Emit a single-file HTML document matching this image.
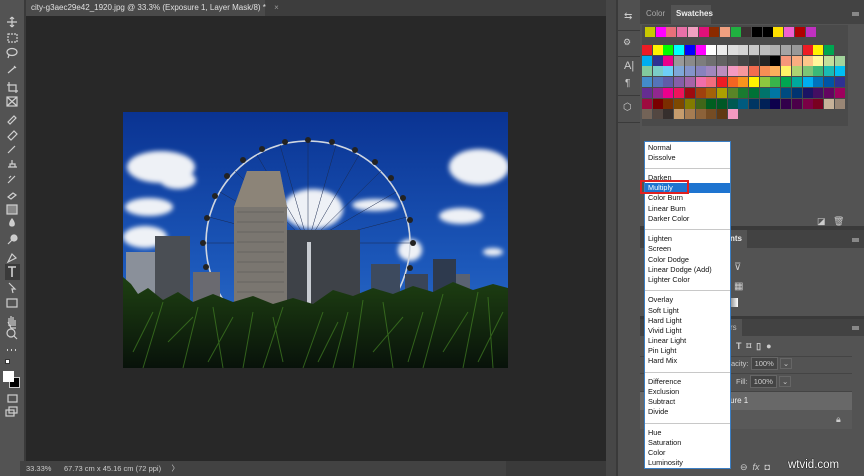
<!DOCTYPE html>
<html><head><meta charset="utf-8">
<style>
*{margin:0;padding:0;box-sizing:border-box}
body{width:864px;height:476px;overflow:hidden;background:#282828;position:relative;font-family:"Liberation Sans",Arial,sans-serif;font-size:8px;color:#ddd}
.a{position:absolute}
.sw{position:absolute;width:10px;height:10px}
.dd div{height:10.2px;line-height:10.2px;padding-left:3px;color:#111;font-size:7.3px}
.dd .s{position:relative}
.dd .s:after{content:"";position:absolute;left:0;right:0;top:5px;height:1px;background:#c8c8c8}
.ic{position:absolute;color:#ccc;font-size:10px}
</style></head><body>
<div class="a" style="left:0;top:0;width:24px;height:476px;background:#535353"></div>
<div class="a" style="left:24px;top:0;width:2px;height:476px;background:#3a3a3a"></div>
<div class="a" style="left:26px;top:0;width:580px;height:16px;background:#3d3d3d"></div>
<div class="a" style="left:26px;top:0;width:239px;height:16px;background:#4a4a4a;color:#e0e0e0;font-size:8px;line-height:15px;padding-left:5px;white-space:nowrap">city-g3aec29e42_1920.jpg @ 33.3% (Exposure 1, Layer Mask/8) * <span style="color:#999;margin-left:6px">×</span></div>
<svg class="a" style="left:0;top:0" width="24" height="420" fill="none" stroke="#d0d0d0" stroke-width="1.2">
<path d="M12 17v10M7 22h10M12 17l-2 2M12 17l2 2M12 27l-2-2M12 27l2-2"/>
<rect x="8" y="34" width="9" height="8" stroke-dasharray="2 1"/>
<ellipse cx="12" cy="52" rx="5" ry="3.5"/><path d="M9 55l-1 3"/>
<path d="M8 73l7-6M14 66l2 2"/>
<path d="M9 82v9h9M7 85h9v8"/>
<rect x="7" y="97" width="10" height="9"/><path d="M7 97l10 9M17 97l-10 9"/>
<path d="M8 122l6-6 2 2-6 6z"/>
<path d="M8 137l6-6 3 3-6 6z"/>
<path d="M8 153l7-7"/>
<path d="M8 167h9M10 167v-3h5v3M12 164v-4"/>
<path d="M8 183l7-7M9 178l2-2"/>
<path d="M8 197l5-4 3 2-5 4z"/>
<rect x="7" y="205" width="10" height="9" fill="#888"/>
<path d="M12 219c-3 4-3 7 0 7s3-3 0-7z" fill="#ccc"/>
<circle cx="14" cy="238" r="3" fill="#ccc"/><path d="M12 240l-4 4"/>
<path d="M8 262l4-8 4 4z"/>
<rect x="5" y="264" width="15" height="16" fill="#3a3a3a" stroke="none"/>
<path d="M8 267h8M12 267v10" stroke-width="1.6"/>
<path d="M9 283l6 6h-3l1 4" />
<rect x="7" y="299" width="10" height="8"/>
<path d="M9 326v-8M11 326v-10M13 326v-9M15 326v-6M8 322l3 6h5"/>
<circle cx="11" cy="333" r="4"/><path d="M14 336l3 3"/>
<path d="M7 350h1M11 350h1M15 350h1" stroke-width="2"/>
<rect x="8" y="395" width="9" height="7"/>
<rect x="6" y="410" width="8" height="6"/><rect x="9" y="407" width="8" height="6"/>
</svg>
<div class="a" style="left:5px;top:359px;width:5px;height:5px;background:#fff;border:1px solid #333"></div>
<div class="a" style="left:9px;top:377px;width:11px;height:11px;background:#000;border:1px solid #ccc"></div>
<div class="a" style="left:3px;top:371px;width:11px;height:11px;background:#fff"></div>
<div class="a" style="left:20px;top:461px;width:486px;height:15px;background:#424242;color:#ccc;font-size:7.5px;line-height:15px;padding-left:6px;white-space:nowrap">33.33%&nbsp;&nbsp;&nbsp;&nbsp;&nbsp;&nbsp;67.73 cm x 45.16 cm (72 ppi)&nbsp;&nbsp;&nbsp;&nbsp;&nbsp;〉</div>
<div class="a" style="left:506px;top:461px;width:100px;height:15px;background:#3a3a3a"></div>
<div class="a" style="left:606px;top:0;width:10px;height:476px;background:#474747"></div>
<div class="a" style="left:616px;top:0;width:2px;height:476px;background:#3a3a3a"></div>
<div class="a" style="left:618px;top:0;width:22px;height:476px;background:#505050"></div>
<div class="a" style="left:618px;top:30px;width:22px;height:1px;background:#3a3a3a"></div>
<div class="a" style="left:618px;top:56px;width:22px;height:1px;background:#3a3a3a"></div>
<div class="a" style="left:618px;top:95px;width:22px;height:1px;background:#3a3a3a"></div>
<div class="a" style="left:618px;top:122px;width:22px;height:1px;background:#3a3a3a"></div>
<div class="ic" style="left:624px;top:11px">⇆</div>
<div class="ic" style="left:623px;top:37px;font-size:9px">⚙</div>
<div class="ic" style="left:624px;top:60px;font-size:11px">A|</div>
<div class="ic" style="left:625px;top:78px">¶</div>
<div class="ic" style="left:623px;top:102px">⬡</div>
<div class="a" style="left:640px;top:0;width:224px;height:476px;background:#535353"></div>
<div class="a" style="left:640px;top:0;width:224px;height:24px;background:#434343"></div>
<div class="a" style="left:640px;top:5px;width:31px;height:19px;color:#aaa;font-size:8px;line-height:17px;padding-left:6px">Color</div>
<div class="a" style="left:671px;top:5px;width:40px;height:19px;background:#535353;color:#eee;font-size:8px;line-height:17px;padding-left:5px;font-weight:bold">Swatches</div>
<div class="a" style="left:852px;top:12px;width:7px;height:4px;background:#888"></div>
<div class="a" style="left:642px;top:25px;width:206px;height:101px;background:#4a4a4a"></div>
<div class="a" style="left:640px;top:226px;width:224px;height:4px;background:#3a3a3a"></div>
<div class="a" style="left:640px;top:230px;width:224px;height:18px;background:#424242"></div>
<div class="a" style="left:700px;top:230px;width:47px;height:18px;background:#535353;color:#eee;font-weight:bold;font-size:8px;line-height:18px;padding-left:30px">nts</div>
<div class="a" style="left:852px;top:238px;width:7px;height:4px;background:#888"></div>
<div class="a" style="left:640px;top:316px;width:224px;height:3px;background:#3a3a3a"></div>
<div class="a" style="left:640px;top:319px;width:224px;height:17px;background:#424242"></div>
<div class="a" style="left:700px;top:319px;width:42px;height:17px;background:#535353;color:#bbb;font-size:8px;line-height:17px;padding-left:30px">rs</div>
<div class="a" style="left:852px;top:326px;width:7px;height:4px;background:#888"></div>
<div class="a" style="left:640px;top:356px;width:212px;height:1px;background:#444"></div>
<div class="a" style="left:640px;top:373px;width:212px;height:1px;background:#444"></div>
<div class="a" style="left:640px;top:391px;width:212px;height:1px;background:#444"></div>
<div class="ic" style="left:736px;top:341px;font-size:9px;font-weight:bold">T&nbsp;&nbsp;⌑&nbsp;&nbsp;▯&nbsp;&nbsp;●</div>
<div class="a" style="left:731px;top:359px;color:#ccc;font-size:7.5px;white-space:nowrap">acity: <span style="background:#444;padding:1px 3px;border:1px solid #666">100%</span> <span style="border:1px solid #666;padding:0 2px">⌄</span></div>
<div class="a" style="left:736px;top:377px;color:#ccc;font-size:7.5px;white-space:nowrap">Fill: <span style="background:#444;padding:1px 3px;border:1px solid #666">100%</span> <span style="border:1px solid #666;padding:0 2px">⌄</span></div>
<div class="a" style="left:640px;top:392px;width:212px;height:18px;background:#686868;color:#eee;font-size:8px;line-height:18px;padding-left:90px">ure 1</div>
<div class="a" style="left:640px;top:410px;width:212px;height:19px;background:#595959"></div>
<div class="ic" style="left:836px;top:414px;font-size:9px">🔒︎</div>
<div class="ic" style="left:734px;top:262px;font-size:10px">⊽</div>
<div class="ic" style="left:734px;top:281px;font-size:10px">▦</div>
<div class="a" style="left:730px;top:298px;width:8px;height:9px;background:linear-gradient(90deg,#888,#fff)"></div>
<div class="ic" style="left:817px;top:216px;font-size:9px">◪&nbsp;&nbsp;&nbsp;🗑︎</div>
<div class="a" style="left:740px;top:462px;color:#ccc;font-size:9px;white-space:nowrap">⊖&nbsp;&nbsp;<i>fx</i>&nbsp;&nbsp;◘&nbsp;&nbsp;&nbsp;&nbsp;</div>
<div class="a" style="left:788px;top:459px;color:#fff;font-size:11.5px;white-space:nowrap;text-shadow:0 0 1px #000,0 0 1px #000">wtvid.com</div>
<div id="sw"></div>
<script>
(function(){
var top=["#c8c800","#ff00ff","#e8707a","#e870a8","#f0a0c0","#e0107a","#8b2a00","#f0a080","#20b040","#3a3232","#000","#000","#ffe000","#f060d0","#b00000","#c030c0"];
var g=[
["#ed1c24","#fff200","#00ff00","#00ffff","#0000ff","#ff00ff","#fff","#ececec","#dedede","#d4d4d4","#c8c8c8","#bcbcbc","#b0b0b0","#a4a4a4","#989898","#ed1c24","#fff200","#00a651"],
["#00aeef","#2e3192","#ec008c","#999","#8a8a8a","#7d7d7d","#6f6f6f","#626262","#555","#464646","#363636","#252525","#000","#f7977a","#f9ad81","#fdc68a","#fff79a","#c4df9b","#a3d39c"],
["#82ca9d","#7bcdc8","#6ecff6","#7ea7d8","#8493ca","#8882be","#a187be","#bc8dbf","#f49ac2","#f6989d","#f26c4f","#f68e55","#fbaf5c","#fff467","#acd372","#7cc576","#3bb878","#1abbb4","#00bff3"],
["#438ccb","#5574b9","#605ca8","#855fa8","#a763a8","#f06eaa","#f26d7d","#ed1c24","#f26522","#f7941d","#fff200","#8dc73f","#39b54a","#00a651","#00a99d","#00aeef","#0072bc","#0054a6","#2e3192"],
["#662d91","#92278f","#ec008c","#ed145b","#9e0b0f","#a0410d","#a36209","#aba000","#598527","#197b30","#007236","#00746b","#0076a3","#004b80","#003471","#1b1464","#440e62","#630460","#9e005d"],
["#9e0b3f","#790000","#7b2e00","#7d4900","#827b00","#406618","#005e20","#005826","#005952","#005b7f","#003663","#002157","#0d004c","#32004b","#4b0049","#7b0046","#790020","#c7b299","#998675"],
["#736357","#534741","#362f2d","#c69c6d","#a67c52","#8c6239","#754c24","#603913","#f49ac2"]];
var h="";
top.forEach(function(c,i){h+='<div class="sw" style="left:'+(645+i*10.7)+'px;top:27px;background:'+c+'"></div>';});
g.forEach(function(r,j){r.forEach(function(c,i){h+='<div class="sw" style="left:'+(642+i*10.7)+'px;top:'+(45+j*10.7)+'px;background:'+c+'"></div>';});});
document.getElementById("sw").innerHTML=h;
})();
</script>
<svg class="a" style="left:123px;top:112px" width="385" height="256" viewBox="0 0 385 256">
<defs>
<linearGradient id="sky" x1="0" y1="0" x2="0" y2="1"><stop offset="0" stop-color="#0a3392"/><stop offset="0.6" stop-color="#1c58ba"/><stop offset="1" stop-color="#3474cc"/></linearGradient>
<filter id="bl"><feGaussianBlur stdDeviation="2.5"/></filter>
<linearGradient id="gr" x1="0" y1="0" x2="0" y2="1"><stop offset="0" stop-color="#1e4012"/><stop offset="1" stop-color="#08120a"/></linearGradient>
</defs>
<rect width="385" height="256" fill="url(#sky)"/>
<g fill="#eef1f6" filter="url(#bl)">
<ellipse cx="38" cy="55" rx="34" ry="16"/><ellipse cx="55" cy="68" rx="18" ry="9"/>
<ellipse cx="26" cy="95" rx="24" ry="9"/>
<ellipse cx="22" cy="125" rx="22" ry="11"/>
<ellipse cx="356" cy="55" rx="30" ry="18"/>
<ellipse cx="338" cy="104" rx="22" ry="8"/>
<ellipse cx="190" cy="97" rx="30" ry="20"/>
<ellipse cx="252" cy="93" rx="23" ry="6"/>
<ellipse cx="287" cy="138" rx="12" ry="11"/>
<ellipse cx="370" cy="140" rx="10" ry="4"/>
</g>
<circle cx="185" cy="131" r="102" stroke="#cfd6e0" stroke-width="1.6" fill="none"/>
<g stroke-width="0.5" stroke="#1a2a50" fill="none">
<path d="M185 131L185 29M185 131L236 43M185 131L273 80M185 131L287 131M185 131L134 43M185 131L97 80M185 131L83 131M185 131L213 33M185 131L157 33M185 131L258 59M185 131L112 59M185 131L284 105M185 131L86 105"/>
</g>
<g fill="#222">
<circle cx="185" cy="28" r="3"/><circle cx="209" cy="30" r="3"/><circle cx="232" cy="38" r="3"/><circle cx="252" cy="50" r="3"/><circle cx="268" cy="66" r="3"/><circle cx="280" cy="86" r="3"/><circle cx="287" cy="108" r="3"/><circle cx="290" cy="131" r="3"/><circle cx="287" cy="156" r="3"/>
<circle cx="162" cy="30" r="3"/><circle cx="139" cy="37" r="3"/><circle cx="120" cy="48" r="3"/><circle cx="104" cy="64" r="3"/><circle cx="92" cy="84" r="3"/><circle cx="84" cy="106" r="3"/><circle cx="80" cy="131" r="3"/><circle cx="83" cy="155" r="3"/>
</g>
<rect x="3" y="140" width="30" height="60" fill="#8a909a"/>
<rect x="32" y="124" width="35" height="80" fill="#4a4e54"/>
<rect x="70" y="160" width="27" height="40" fill="#6a6a70"/>
<rect x="164" y="118" width="73" height="95" fill="#3e4248"/>
<rect x="184" y="130" width="4" height="90" fill="#c8ccd2"/>
<path d="M111 95L124 59H157L164 95V210H111Z" fill="#7a7670"/>
<path d="M124 59H157L164 95H111Z" fill="#8c8478"/>
<g stroke="#55524e" stroke-width="0.6"><path d="M114 100H161M114 110H161M114 120H161M114 130H161M114 140H161M114 150H161M114 160H161M114 170H161M114 180H161"/></g>
<rect x="248" y="152" width="29" height="45" fill="#3d4a5e"/>
<rect x="282" y="162" width="23" height="35" fill="#3a4558"/>
<rect x="310" y="147" width="23" height="50" fill="#2e3a4e"/>
<rect x="333" y="162" width="14" height="35" fill="#5a6272"/>
<path d="M0 256V165L8 172L15 182L25 176L40 188L55 180L70 190L90 182L110 190L130 184L150 192L170 186L190 192L210 178L230 184L250 176L270 182L290 174L310 180L330 170L350 178L370 172L385 176V256Z" fill="url(#gr)"/>
<g stroke="#3f7a22" stroke-width="1" opacity="0.75">
<path d="M20 256L40 190M60 256L75 195M100 256L90 195M140 256L160 195M180 256L200 200M230 256L240 188M270 256L260 190M300 256L320 182M340 256L355 180M370 256L365 185M120 256L130 200M210 256L225 200M45 230L70 205M250 240L280 205M320 240L345 200M10 240L30 200M85 250L110 205M160 250L150 205M195 250L215 210M285 250L300 200M355 250L380 200"/>
</g>
</svg>
<div class="a dd" style="left:644px;top:141px;width:87px;height:328px;background:#fff;border:1px solid #3c7fc4;padding-top:0.5px">
<div>Normal</div><div>Dissolve</div><div class="s"></div>
<div>Darken</div><div style="background:#1e74d0;color:#fff">Multiply</div><div>Color Burn</div><div>Linear Burn</div><div>Darker Color</div><div class="s"></div>
<div>Lighten</div><div>Screen</div><div>Color Dodge</div><div>Linear Dodge (Add)</div><div>Lighter Color</div><div class="s"></div>
<div>Overlay</div><div>Soft Light</div><div>Hard Light</div><div>Vivid Light</div><div>Linear Light</div><div>Pin Light</div><div>Hard Mix</div><div class="s"></div>
<div>Difference</div><div>Exclusion</div><div>Subtract</div><div>Divide</div><div class="s"></div>
<div>Hue</div><div>Saturation</div><div>Color</div><div>Luminosity</div>
</div>
<div class="a" style="left:640px;top:180px;width:49px;height:14px;border:2px solid #e02020"></div>
</body></html>
